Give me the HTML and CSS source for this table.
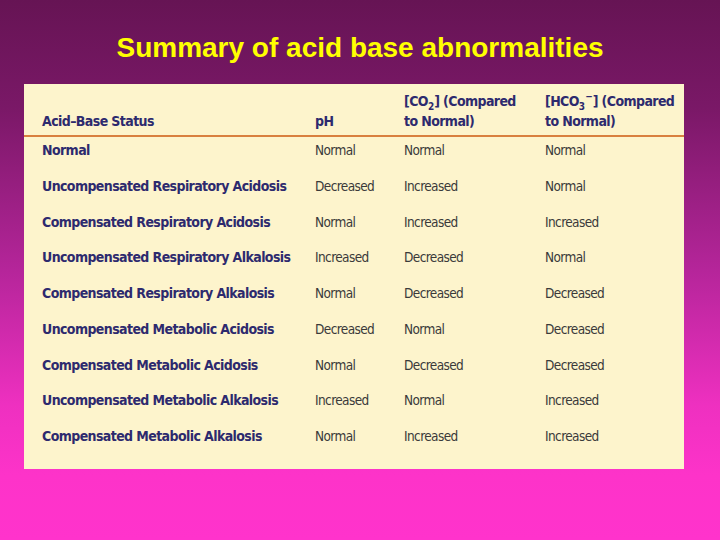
FILE: index.html
```html
<!DOCTYPE html>
<html>
<head>
<meta charset="utf-8">
<link rel="stylesheet" href="styles.css">
</head>
<body>
<h1 class="title">Summary of acid base abnormalities</h1>
<div class="card">
  <div class="row head">
    <div class="c1">Acid–Base Status</div>
    <div>pH</div>
    <div>[CO<sub>2</sub>] (Compared<br>to Normal)</div>
    <div>[HCO<sub>3</sub><sup>−</sup>] (Compared<br>to Normal)</div>
  </div>
  <div class="row"><div class="c1">Normal</div><div>Normal</div><div>Normal</div><div>Normal</div></div>
  <div class="row"><div class="c1">Uncompensated Respiratory Acidosis</div><div>Decreased</div><div>Increased</div><div>Normal</div></div>
  <div class="row"><div class="c1">Compensated Respiratory Acidosis</div><div>Normal</div><div>Increased</div><div>Increased</div></div>
  <div class="row"><div class="c1">Uncompensated Respiratory Alkalosis</div><div>Increased</div><div>Decreased</div><div>Normal</div></div>
  <div class="row"><div class="c1">Compensated Respiratory Alkalosis</div><div>Normal</div><div>Decreased</div><div>Decreased</div></div>
  <div class="row"><div class="c1">Uncompensated Metabolic Acidosis</div><div>Decreased</div><div>Normal</div><div>Decreased</div></div>
  <div class="row"><div class="c1">Compensated Metabolic Acidosis</div><div>Normal</div><div>Decreased</div><div>Decreased</div></div>
  <div class="row"><div class="c1">Uncompensated Metabolic Alkalosis</div><div>Increased</div><div>Normal</div><div>Increased</div></div>
  <div class="row"><div class="c1">Compensated Metabolic Alkalosis</div><div>Normal</div><div>Increased</div><div>Increased</div></div>
</div>
</body>
</html>
```
FILE: styles.css
```css
html, body {
  margin: 0;
  padding: 0;
}
body {
  width: 720px;
  height: 540px;
  overflow: hidden;
  background: linear-gradient(to bottom, #661454 0%, #7a1867 20%, #b5259a 50%, #ee30c0 75%, #fd33c9 88%, #ff33cc 100%);
}
.title {
  margin: 0;
  padding-top: 32px;
  height: 32px;
  line-height: 32px;
  text-align: center;
  font-family: "Liberation Sans", Arial, sans-serif;
  font-weight: bold;
  font-size: 28px;
  color: #ffff00;
}
.card {
  margin: 20px 36px 0 24px;
  height: 385px;
  box-sizing: border-box;
  background: #fdf4cc;
  padding: 0 0 0 18px;
  font-family: "DejaVu Sans Condensed", "DejaVu Sans", sans-serif;
  font-stretch: condensed;
  font-size: 13.5px;
  letter-spacing: -0.6px;
  line-height: 20px;
  color: #3a3a3a;
}
.row {
  display: grid;
  grid-template-columns: 273px 89px 141px 1fr;
  height: 35.75px;
  box-sizing: border-box;
  padding-top: 3px;
  align-items: start;
}
.row .c1 {
  font-size: 14px;
  font-weight: bold;
  color: #2d2a6e;
}
.row.head {
  height: auto;
  margin-left: -18px;
  padding: 7px 0 4px 18px;
  border-bottom: 2px solid #d9803f;
  align-items: end;
  font-size: 14px;
  font-weight: bold;
  color: #2d2a6e;
}
sub, sup {
  font-size: 10px;
  line-height: 0;
  letter-spacing: 0;
}
```
